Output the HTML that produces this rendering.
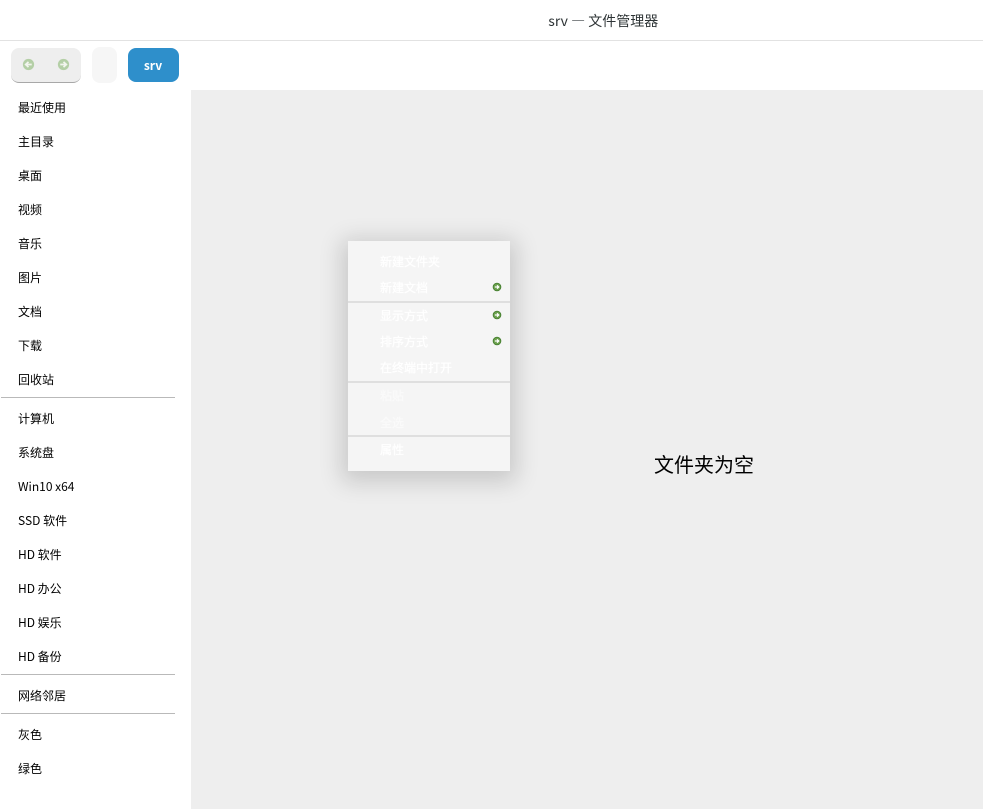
<!DOCTYPE html>
<html lang="zh">
<head>
<meta charset="utf-8">
<style>
html,body{margin:0;padding:0;background:#fff}
body{width:983px;height:809px;position:relative;overflow:hidden;font-family:"Noto Sans CJK SC","Liberation Sans",sans-serif;color:#000}
.abs{position:absolute}
.t{position:absolute;white-space:nowrap;line-height:18px;font-size:12px}
.s{left:18px;color:#000}
.sep{position:absolute;left:1px;width:174px;height:1px;background:#b9b9b9}
.m{left:380px;color:#fff;-webkit-text-stroke:.3px #fff}
.d{opacity:.5}
.msep{position:absolute;left:348px;width:162px;height:2px;background:#dfdfdf}
.ico{position:absolute;width:10px;height:10px}
</style>
</head>
<body>
<div class="abs" style="left:0;top:40px;width:983px;height:1px;background:#e2e2e2"></div>
<div class="t" style="left:548.3px;top:11px;font-size:14px;line-height:20px;color:#2e3436">srv — 文件管理器</div>

<div class="abs" style="left:11px;top:48px;width:70px;height:34px;background:#eeeeee;border-radius:8px;border-bottom:1px solid #a8a8a8"></div>
<svg class="ico" style="left:21.5px;top:58px;width:13px;height:13px" viewBox="0 0 12 12"><circle cx="6" cy="6" r="5.2" fill="#b4cfa6"/><path d="M9 6H4M6 3.6 3.4 6 6 8.4" fill="none" stroke="#f2f5ee" stroke-width="1.6"/></svg>
<svg class="ico" style="left:57px;top:58px;width:13px;height:13px" viewBox="0 0 12 12"><circle cx="6" cy="6" r="5.2" fill="#b4cfa6"/><path d="M3 6H8M6 3.6 8.6 6 6 8.4" fill="none" stroke="#f2f5ee" stroke-width="1.6"/></svg>
<div class="abs" style="left:92px;top:47px;width:25px;height:36px;background:#f6f6f6;border-radius:8px"></div>
<div class="abs" style="left:128px;top:48px;width:50px;height:34px;padding-right:1px;background:#2e8fcb;border-radius:8px;color:#fff;font-size:12px;font-weight:700;line-height:35px;text-align:center">srv</div>

<div class="abs" style="left:191px;top:90px;width:792px;height:719px;background:#eeeeee"></div>

<div class="t s" style="top:99px">最近使用</div>
<div class="t s" style="top:133px">主目录</div>
<div class="t s" style="top:167px">桌面</div>
<div class="t s" style="top:201px">视频</div>
<div class="t s" style="top:235px">音乐</div>
<div class="t s" style="top:269px">图片</div>
<div class="t s" style="top:303px">文档</div>
<div class="t s" style="top:337px">下载</div>
<div class="t s" style="top:371px">回收站</div>
<div class="sep" style="top:397px"></div>
<div class="t s" style="top:410px">计算机</div>
<div class="t s" style="top:444px">系统盘</div>
<div class="t s" style="top:478px">Win10 x64</div>
<div class="t s" style="top:512px">SSD 软件</div>
<div class="t s" style="top:546px">HD 软件</div>
<div class="t s" style="top:580px">HD 办公</div>
<div class="t s" style="top:614px">HD 娱乐</div>
<div class="t s" style="top:648px">HD 备份</div>
<div class="sep" style="top:674px"></div>
<div class="t s" style="top:687px">网络邻居</div>
<div class="sep" style="top:713px"></div>
<div class="t s" style="top:726px">灰色</div>
<div class="t s" style="top:760px">绿色</div>

<div class="t" style="left:654px;top:449px;font-size:20px;line-height:30px;color:#000">文件夹为空</div>

<div class="abs" style="left:348px;top:241px;width:162px;height:230px;background:#f5f5f5;box-shadow:0 5px 22px 6px rgba(0,0,0,.16)"></div>
<div class="t m" style="top:253px">新建文件夹</div>
<div class="t m" style="top:279px">新建文档</div>
<div class="msep" style="top:301px"></div>
<div class="t m" style="top:307px">显示方式</div>
<div class="t m" style="top:333px">排序方式</div>
<div class="t m" style="top:359px">在终端中打开</div>
<div class="msep" style="top:381px"></div>
<div class="t m d" style="top:387px">粘贴</div>
<div class="t m d" style="top:414px">全选</div>
<div class="msep" style="top:435px"></div>
<div class="t m" style="top:441px">属性</div>

<svg class="ico" style="left:492.3px;top:282.3px" viewBox="0 0 10 10"><circle cx="5" cy="5" r="3.9" fill="#6a9f4c" stroke="#3f7a2a" stroke-width=".8"/><path d="M2.8 5H6.4M5 3.3 6.8 5 5 6.7" fill="none" stroke="#fff" stroke-width="1.2"/></svg>
<svg class="ico" style="left:492.3px;top:310.3px" viewBox="0 0 10 10"><circle cx="5" cy="5" r="3.9" fill="#6a9f4c" stroke="#3f7a2a" stroke-width=".8"/><path d="M2.8 5H6.4M5 3.3 6.8 5 5 6.7" fill="none" stroke="#fff" stroke-width="1.2"/></svg>
<svg class="ico" style="left:492.3px;top:336.3px" viewBox="0 0 10 10"><circle cx="5" cy="5" r="3.9" fill="#6a9f4c" stroke="#3f7a2a" stroke-width=".8"/><path d="M2.8 5H6.4M5 3.3 6.8 5 5 6.7" fill="none" stroke="#fff" stroke-width="1.2"/></svg>
</body>
</html>
